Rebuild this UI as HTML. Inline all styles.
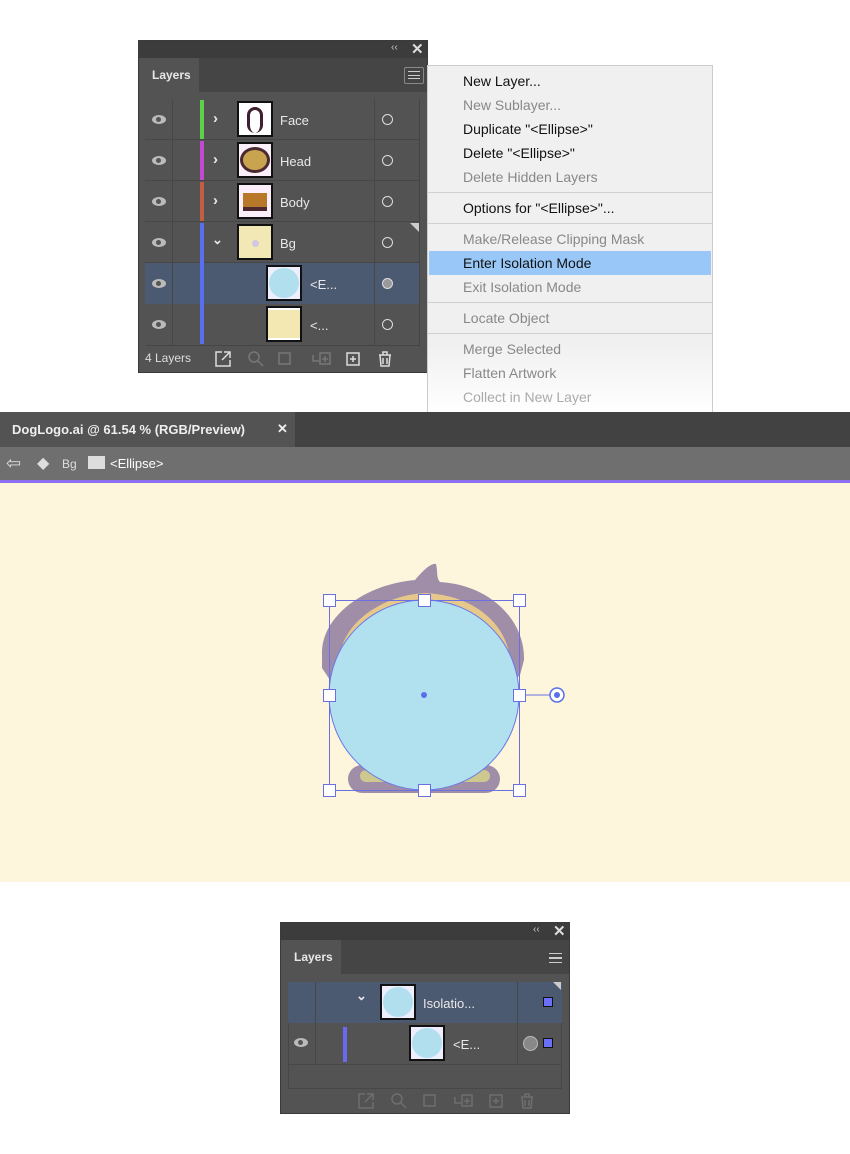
<!DOCTYPE html>
<html><head><style>
*{margin:0;padding:0;box-sizing:border-box}
body{width:850px;height:1154px;background:#fff;position:relative;overflow:hidden;font-family:"Liberation Sans",sans-serif}
.abs{position:absolute}
.panel{background:#535353;border:1px solid #3a3a3a}
.txt{color:#e8e8e8;font-size:13px}
.menu div{position:absolute;left:35px;font-size:14px;color:#111}
.menu .dis{color:#888}
.sep{position:absolute;left:0;right:0;height:1px;background:#d0d0d0}
.thumb{position:absolute;width:36px;height:36px;border:2px solid #111;background:#fff}
.eye{position:absolute;width:14px;height:9px;border-radius:50%;background:#bbb}
.eye::after{content:"";position:absolute;left:4px;top:2px;width:5px;height:5px;border-radius:50%;background:#555}
.vis{position:absolute;width:11px;height:11px;border:1.5px solid #ddd;border-radius:50%}
</style></head><body>

<div class="abs panel" style="left:138px;top:40px;width:290px;height:333px">
 <div class="abs" style="left:0;top:0;width:288px;height:17px;background:#3c3c3c"></div>
 <div class="abs" style="left:252px;top:1px;color:#ccc;font-size:10px">‹‹</div>
 <div class="abs" style="left:272px;top:-1px;color:#ddd;font-size:15px;font-weight:bold">✕</div>
 <div class="abs" style="left:0;top:17px;width:288px;height:34px;background:#454545"></div>
 <div class="abs" style="left:0;top:17px;width:60px;height:34px;background:#535353"></div>
 <div class="abs txt" style="left:13px;top:27px;font-size:12px;font-weight:bold">Layers</div>
 <div class="abs" style="left:265px;top:26px;width:20px;height:17px;border:1px solid #888;border-radius:2px;background:#444"></div>
 <div class="abs" style="left:269px;top:30px;width:12px;height:8px;border-top:1.5px solid #ccc;border-bottom:1.5px solid #ccc"></div>
 <div class="abs" style="left:269px;top:33.5px;width:12px;height:1.5px;background:#ccc"></div>
 <div class="abs" style="left:7px;top:58px;width:274px;height:247px;background:#4a4a4a;border:1px solid #454545"></div>
</div>
<div class="abs" style="left:145px;top:99px;width:274px;height:41px;background:#535353;border-bottom:1px solid #474747"></div>
<div class="abs" style="left:145px;top:140px;width:274px;height:41px;background:#535353;border-bottom:1px solid #474747"></div>
<div class="abs" style="left:145px;top:181px;width:274px;height:41px;background:#535353;border-bottom:1px solid #474747"></div>
<div class="abs" style="left:145px;top:222px;width:274px;height:41px;background:#535353;border-bottom:1px solid #474747"></div>
<div class="abs" style="left:145px;top:263px;width:274px;height:41px;background:#4b5a70"></div>
<div class="abs" style="left:145px;top:304px;width:274px;height:41px;background:#535353"></div>
<div class="abs" style="left:172px;top:99px;width:1px;height:246px;background:#474747"></div>
<div class="abs" style="left:374px;top:99px;width:1px;height:246px;background:#474747"></div>
<div class="abs" style="left:200px;top:100px;width:4px;height:39px;background:#5fd04a"></div>
<div class="abs" style="left:200px;top:141px;width:4px;height:39px;background:#c04ad0"></div>
<div class="abs" style="left:200px;top:182px;width:4px;height:39px;background:#c06040"></div>
<div class="abs" style="left:200px;top:223px;width:4px;height:121px;background:#5a6ef0"></div>
<div class="eye" style="left:152px;top:115px"></div>
<div class="eye" style="left:152px;top:156px"></div>
<div class="eye" style="left:152px;top:197px"></div>
<div class="eye" style="left:152px;top:238px"></div>
<div class="eye" style="left:152px;top:279px"></div>
<div class="eye" style="left:152px;top:320px"></div>
<div class="abs txt" style="left:213px;top:110px;font-size:15px;font-weight:bold">›</div>
<div class="abs txt" style="left:213px;top:151px;font-size:15px;font-weight:bold">›</div>
<div class="abs txt" style="left:213px;top:192px;font-size:15px;font-weight:bold">›</div>
<div class="abs txt" style="left:212px;top:232px;font-size:13px;font-weight:bold">⌄</div>
<div class="thumb" style="left:237px;top:101px"><div class="abs" style="left:8px;top:4px;width:16px;height:26px;border-radius:8px;border:3px solid #402030;border-bottom:none"></div></div>
<div class="thumb" style="left:237px;top:142px;background:#fbeffb"><div class="abs" style="left:1px;top:3px;width:30px;height:26px;border-radius:50%;background:#c9a450;border:3px solid #4a2a30"></div></div>
<div class="thumb" style="left:237px;top:183px;background:#fbeffb"><div class="abs" style="left:4px;top:8px;width:24px;height:18px;background:#b8782a;border-bottom:4px solid #4a2a30"></div></div>
<div class="thumb" style="left:237px;top:224px;background:#f2e8b6"><div class="abs" style="left:13px;top:14px;width:7px;height:7px;border-radius:50%;background:#cfc8e0"></div></div>
<div class="thumb" style="left:266px;top:265px;background:#eef"><div class="abs" style="left:1px;top:1px;width:30px;height:30px;border-radius:50%;background:#b2dfee"></div></div>
<div class="thumb" style="left:266px;top:306px"><div class="abs" style="left:0;top:2px;width:32px;height:28px;background:#f4e8b2"></div></div>
<div class="abs txt" style="left:280px;top:113px">Face</div>
<div class="abs txt" style="left:280px;top:154px">Head</div>
<div class="abs txt" style="left:280px;top:195px">Body</div>
<div class="abs txt" style="left:280px;top:236px">Bg</div>
<div class="abs txt" style="left:310px;top:277px">&lt;E...</div>
<div class="abs txt" style="left:310px;top:318px">&lt;...</div>
<div class="vis" style="left:382px;top:114px"></div>
<div class="vis" style="left:382px;top:155px"></div>
<div class="vis" style="left:382px;top:196px"></div>
<div class="vis" style="left:382px;top:237px"></div>
<div class="vis" style="left:382px;top:278px;background:#999"></div>
<div class="vis" style="left:382px;top:319px"></div>
<div class="abs" style="left:410px;top:223px;width:0;height:0;border-left:9px solid transparent;border-top:9px solid #ccc"></div>
<div class="abs txt" style="left:145px;top:351px;font-size:12px;color:#ddd">4 Layers</div>
<svg class="abs" style="left:212px;top:349px" width="180" height="20">
 <g fill="none" stroke="#ddd" stroke-width="1.5"><path d="M10 3H4v14h14v-6M12 3h6v6M18 3l-8 8"/></g>
 <g fill="none" stroke="#777" stroke-width="1.5"><circle cx="42" cy="8" r="5"/><path d="M46 12l5 5"/>
 <rect x="67" y="4" width="11" height="11"/><path d="M101 6v6h6M108 4h10v11h-10z M113 7v6M110 10h6"/></g>
 <g fill="none" stroke="#ddd" stroke-width="1.5"><rect x="135" y="4" width="12" height="12"/><path d="M141 7v6M138 10h6"/>
 <path d="M167 6h12M171 6V3h4v3M168 6l1 11h8l1-11M171 9v6M175 9v6"/></g>
</svg>

<div class="abs menu" style="left:427px;top:65px;width:286px;height:347px;background:linear-gradient(#f0f0f0 80%,#fff);border:1px solid #ccc;border-bottom:none">
 <div style="top:7px">New Layer...</div>
 <div class="dis" style="top:31px">New Sublayer...</div>
 <div style="top:55px">Duplicate "&lt;Ellipse&gt;"</div>
 <div style="top:79px">Delete "&lt;Ellipse&gt;"</div>
 <div class="dis" style="top:103px">Delete Hidden Layers</div>
 <p class="sep" style="top:126px"></p>
 <div style="top:134px">Options for "&lt;Ellipse&gt;"...</div>
 <p class="sep" style="top:157px"></p>
 <div class="dis" style="top:165px">Make/Release Clipping Mask</div>
 <p class="abs" style="left:1px;top:185px;width:282px;height:24px;background:#99c8f8"></p>
 <div style="top:189px">Enter Isolation Mode</div>
 <div class="dis" style="top:213px">Exit Isolation Mode</div>
 <p class="sep" style="top:236px"></p>
 <div class="dis" style="top:244px">Locate Object</div>
 <p class="sep" style="top:267px"></p>
 <div class="dis" style="top:275px">Merge Selected</div>
 <div class="dis" style="top:299px">Flatten Artwork</div>
 <div class="dis" style="top:323px;color:#aaa">Collect in New Layer</div>
</div>

<div class="abs" style="left:0;top:412px;width:850px;height:35px;background:#424242"></div>
<div class="abs" style="left:0;top:412px;width:295px;height:35px;background:#535353"></div>
<div class="abs" style="left:12px;top:422px;color:#eee;font-size:13px;font-weight:bold">DogLogo.ai @ 61.54 % (RGB/Preview)</div>
<div class="abs" style="left:277px;top:421px;color:#eee;font-size:13px;font-weight:bold">✕</div>
<div class="abs" style="left:0;top:447px;width:850px;height:33px;background:#6f6f6f"></div>
<div class="abs" style="left:6px;top:453px;color:#ddd;font-size:18px">⇦</div>
<div class="abs" style="left:37px;top:453px;color:#ddd;font-size:16px">◆</div>
<div class="abs" style="left:62px;top:457px;color:#ddd;font-size:12px">Bg</div>
<div class="abs" style="left:88px;top:456px;width:17px;height:13px;background:#ddd"></div>
<div class="abs" style="left:110px;top:456px;color:#fff;font-size:13px">&lt;Ellipse&gt;</div>
<div class="abs" style="left:0;top:480px;width:850px;height:3px;background:#8a70f0"></div>
<div class="abs" style="left:0;top:483px;width:850px;height:399px;background:#fdf5dc"></div>

<svg class="abs" style="left:310px;top:560px" width="260" height="240" viewBox="0 0 260 240">
 <path d="M12 95 C10 60 50 25 105 20 C112 12 120 3 126 4 C128 12 126 18 130 22 C180 25 215 60 214 100 L210 115 L205 120 L20 120 L12 108 Z" fill="#a08ea8"/>
 <path d="M30 95 C35 60 75 35 115 33 C160 35 195 60 200 98 Z" fill="#e6c88a"/>
 <rect x="38" y="205" width="152" height="28" rx="14" fill="#a08ea8"/>
 <rect x="50" y="210" width="130" height="12" rx="6" fill="#ccc890"/>
 <circle cx="114" cy="135" r="95" fill="#b1e0ee" stroke="#6a78e8" stroke-width="1"/>
 <rect x="19.5" y="40.5" width="190" height="190" fill="none" stroke="#6a70e0" stroke-width="1"/>
 <line x1="209" y1="135" x2="240" y2="135" stroke="#6a70e0"/>
 <circle cx="247" cy="135" r="7" fill="#fff" stroke="#5a70e8" stroke-width="1.5"/>
 <circle cx="247" cy="135" r="3" fill="#5a70e8"/>
 <circle cx="114" cy="135" r="3" fill="#5a70e8"/>
 <g fill="#fff" stroke="#6a70e0">
  <rect x="13.5" y="34.5" width="12" height="12"/><rect x="108.5" y="34.5" width="12" height="12"/><rect x="203.5" y="34.5" width="12" height="12"/>
  <rect x="13.5" y="129.5" width="12" height="12"/><rect x="203.5" y="129.5" width="12" height="12"/>
  <rect x="13.5" y="224.5" width="12" height="12"/><rect x="108.5" y="224.5" width="12" height="12"/><rect x="203.5" y="224.5" width="12" height="12"/>
 </g>
</svg>

<div class="abs panel" style="left:280px;top:922px;width:290px;height:192px">
 <div class="abs" style="left:0;top:0;width:288px;height:17px;background:#3c3c3c"></div>
 <div class="abs" style="left:252px;top:1px;color:#ccc;font-size:10px">‹‹</div>
 <div class="abs" style="left:272px;top:-1px;color:#ddd;font-size:15px;font-weight:bold">✕</div>
 <div class="abs" style="left:0;top:17px;width:288px;height:34px;background:#454545"></div>
 <div class="abs" style="left:0;top:17px;width:60px;height:34px;background:#535353"></div>
 <div class="abs txt" style="left:13px;top:27px;font-size:12px;font-weight:bold">Layers</div>
 <div class="abs" style="left:268px;top:30px;width:13px;height:10px;border-top:1.5px solid #ccc;border-bottom:1.5px solid #ccc"></div>
 <div class="abs" style="left:268px;top:34px;width:13px;height:1.5px;background:#ccc"></div>
 <div class="abs" style="left:7px;top:59px;width:274px;height:107px;background:#535353;border:1px solid #474747"></div>
 <div class="abs" style="left:7px;top:59px;width:274px;height:41px;background:#4b5a70"></div>
 <div class="abs" style="left:7px;top:141px;width:274px;height:1px;background:#474747"></div>
 <div class="abs" style="left:34px;top:59px;width:1px;height:82px;background:#474747"></div>
 <div class="abs" style="left:236px;top:59px;width:1px;height:82px;background:#474747"></div>
 <div class="abs" style="left:62px;top:104px;width:4px;height:35px;background:#6a6af0"></div>
 <div class="abs txt" style="left:75px;top:65px;font-size:13px;font-weight:bold">⌄</div>
 <div class="thumb" style="left:99px;top:61px;background:#eef"><div class="abs" style="left:1px;top:1px;width:30px;height:30px;border-radius:50%;background:#b2dfee"></div></div>
 <div class="thumb" style="left:128px;top:102px;background:#eef"><div class="abs" style="left:1px;top:1px;width:30px;height:30px;border-radius:50%;background:#b2dfee"></div></div>
 <div class="abs txt" style="left:142px;top:73px">Isolatio...</div>
 <div class="abs txt" style="left:172px;top:114px">&lt;E...</div>
 <div class="eye" style="left:13px;top:115px"></div>
 <div class="abs" style="left:242px;top:113px;width:15px;height:15px;border:1.5px solid #bbb;border-radius:50%;background:#888"></div>
 <div class="abs" style="left:262px;top:74px;width:10px;height:10px;background:#6a70f8;border:1.5px solid #111"></div>
 <div class="abs" style="left:262px;top:115px;width:10px;height:10px;background:#6a70f8;border:1.5px solid #111"></div>
 <div class="abs" style="left:272px;top:59px;width:0;height:0;border-left:8px solid transparent;border-top:8px solid #ccc"></div>
 <svg class="abs" style="left:74px;top:168px" width="190" height="20">
  <g fill="none" stroke="#6e6e6e" stroke-width="1.5">
   <path d="M10 3H4v14h14v-6M12 3h6v6M18 3l-8 8"/>
   <circle cx="42" cy="8" r="5"/><path d="M46 12l5 5"/>
   <rect x="69" y="4" width="11" height="11"/>
   <path d="M100 6v6h6M107 4h10v11h-10z M112 7v6M109 10h6"/>
   <rect x="135" y="4" width="12" height="12"/><path d="M141 7v6M138 10h6"/>
   <path d="M166 6h12M170 6V3h4v3M167 6l1 11h8l1-11M170 9v6M174 9v6"/>
  </g>
 </svg>
</div>
</body></html>
